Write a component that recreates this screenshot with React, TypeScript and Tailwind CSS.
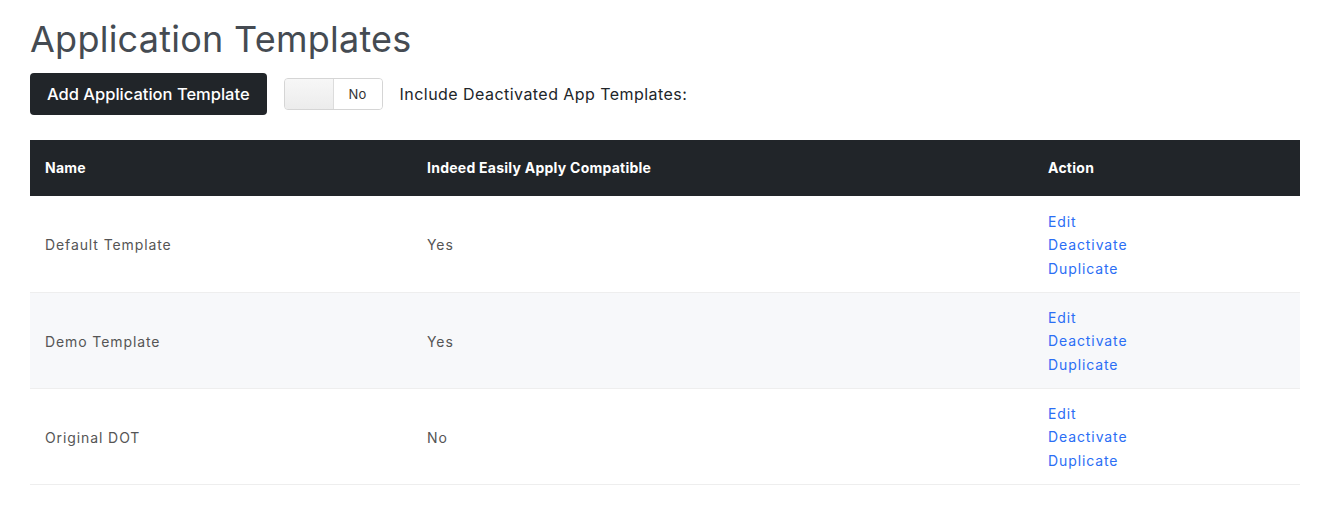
import { useState } from 'react'

type Template = {
  name: string
  indeed: string
}

const templates: Template[] = [
  { name: 'Default Template', indeed: 'Yes' },
  { name: 'Demo Template', indeed: 'Yes' },
  { name: 'Original DOT', indeed: 'No' },
]

export default function App() {
  const [includeDeactivated, setIncludeDeactivated] = useState(false)

  return (
    <div className="min-h-screen bg-white pl-[30px] pr-[32px] pt-[14px] font-['Inter',sans-serif] text-[#212529]">
      <h2 className="text-[36px] leading-[50px] font-normal text-[#454b52] tracking-[0.25px]">Application Templates</h2>

      <div className="mt-[9px] flex items-center">
        <button className="h-[42px] rounded-[4px] bg-[#212529] px-[17px] text-[16.5px] font-medium text-white">
          Add Application Template
        </button>

        <button
          onClick={() => setIncludeDeactivated(v => !v)}
          className="ml-[17px] flex h-[32px] w-[99px] overflow-hidden rounded-[4px] border border-[#d5d5d5] bg-[#f4f4f4] shadow-[inset_0_1px_2px_rgba(0,0,0,0.05)]"
        >
          <span className="h-full w-[49px] border-r border-[#dcdcdc] bg-gradient-to-b from-[#f7f7f7] to-[#ececec]" />
          <span className="flex h-full flex-1 items-center justify-center bg-white pt-[1px] text-[13px] tracking-[0.3px] text-[#333]">
            {includeDeactivated ? 'Yes' : 'No'}
          </span>
        </button>

        <span className="ml-[17px] text-[16px] tracking-[0.45px] text-[#212529]">Include Deactivated App Templates:</span>
      </div>

      <table className="mt-[25px] w-full border-collapse text-[14px]">
        <thead>
          <tr className="h-[56px] bg-[#212529] text-left text-white">
            <th className="w-[382px] px-[15px] pb-[2px] font-bold tracking-[0.25px]">Name</th>
            <th className="w-[621px] px-[15px] pb-[2px] font-bold tracking-[0.25px]">Indeed Easily Apply Compatible</th>
            <th className="px-[15px] pb-[2px] font-bold tracking-[0.25px]">Action</th>
          </tr>
        </thead>
        <tbody>
          {templates.map((t, i) => (
            <tr key={t.name} className={`h-[96px] border-b border-[#eeeeee] ${i % 2 === 1 ? 'bg-[#f7f8fa]' : 'bg-white'}`}>
              <td className="px-[15px] pt-[2px] tracking-[0.9px] text-[#555]">{t.name}</td>
              <td className="px-[15px] pt-[2px] tracking-[0.9px] text-[#555]">{t.indeed}</td>
              <td className="px-[15px] pt-[2px]">
                <div className="flex flex-col items-start leading-[23.5px] tracking-[0.9px] text-[#2b6ef5]">
                  <a href="#">Edit</a>
                  <a href="#">Deactivate</a>
                  <a href="#">Duplicate</a>
                </div>
              </td>
            </tr>
          ))}
        </tbody>
      </table>
    </div>
  )
}
